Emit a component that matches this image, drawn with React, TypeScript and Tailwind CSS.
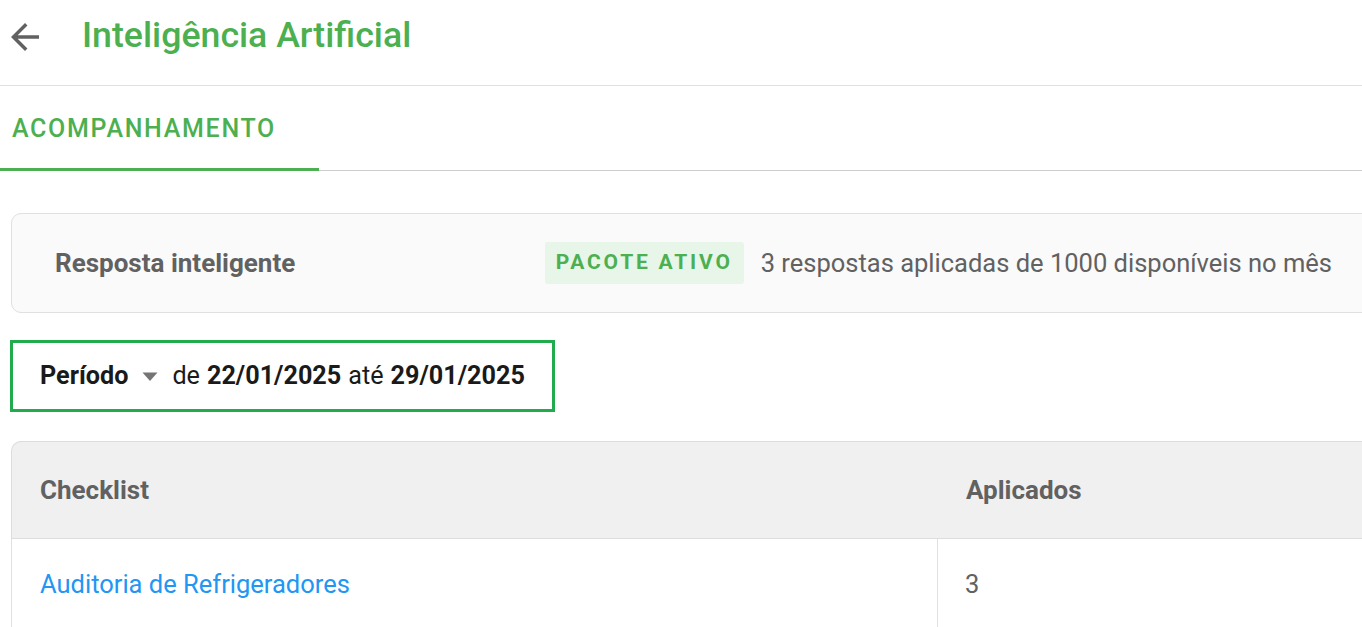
import React from 'react';

const font = { fontFamily: 'Roboto, "Noto Sans", sans-serif' };

function BackArrow() {
  return (
    <svg width="42" height="42" viewBox="0 0 24 24" className="fill-[#616161]">
      <path d="M20 11H7.83l5.59-5.59L12 4l-8 8 8 8 1.41-1.41L7.83 13H20v-2z" />
    </svg>
  );
}

function Caret() {
  return (
    <svg width="16" height="10" viewBox="0 0 16 10" className="fill-[#757575]">
      <path d="M0.5 0.5h15L8 9z" />
    </svg>
  );
}

export default function App() {
  return (
    <div className="w-[1362px] h-[627px] overflow-hidden bg-white" style={font}>
      <div className="w-[1440px]">
        <header className="h-[86px] flex items-center border-b border-[#e0e0e0]">
          <button className="ml-[4px] mt-[-12px] w-[42px] h-[42px] flex items-center justify-center">
            <BackArrow />
          </button>
          <h1 className="ml-[36px] mt-[-13px] text-[35.7px] font-medium text-[#4caf50] leading-none">
            Inteligência Artificial
          </h1>
        </header>

        <nav className="h-[85px] flex border-b border-[#cccccc]">
          <div className="w-[319px] flex items-center pl-[12px] border-b-[3px] border-[#4caf50] mb-[-1px]">
            <span className="text-[25px] font-medium tracking-[1.7px] text-[#4caf50] leading-none mb-[-2px]">
              ACOMPANHAMENTO
            </span>
          </div>
        </nav>

        <main className="px-[11px] pt-[42px]">
          <section className="w-[1400px] h-[100px] flex items-center rounded-[10px] border border-[#e0e0e0] bg-[#fafafa] pl-[43px] pr-[78px]">
            <span className="text-[26px] font-bold text-[#616161]">Resposta inteligente</span>
            <div className="ml-auto flex items-center gap-[17px]">
              <span className="h-[42px] px-[11px] flex items-center rounded-[3px] bg-[#e8f5e9] text-[21px] font-bold tracking-[2.8px] text-[#4caf50]">
                PACOTE ATIVO
              </span>
              <span className="text-[25.5px] text-[#616161]">
                3 respostas aplicadas de 1000 disponíveis no mês
              </span>
            </div>
          </section>

          <div className="mt-[27px] ml-[-1px] w-[545px] h-[72px] flex items-center border-[3px] border-[#22ab4c] pl-[27px] text-[25.2px] text-[#1a1a1a]">
            <span className="font-bold">Período</span>
            <span className="ml-[14px] mr-[14px] mt-[2px]">
              <Caret />
            </span>
            <span>de</span>
            <span className="font-bold ml-[7px]">22/01/2025</span>
            <span className="ml-[7px]">até</span>
            <span className="font-bold ml-[7px]">29/01/2025</span>
          </div>

          <table className="mt-[29px] w-[1400px] border-separate border-spacing-0 text-left">
            <thead>
              <tr className="h-[98px] bg-[#f0f0f0]">
                <th className="w-[927px] pl-[28px] text-[26px] font-bold text-[#616161] border-t border-l border-b border-[#dddddd] rounded-tl-[10px]">
                  Checklist
                </th>
                <th className="pl-[28px] text-[26px] font-bold text-[#616161] border-t border-b border-[#dddddd]">
                  Aplicados
                </th>
              </tr>
            </thead>
            <tbody>
              <tr className="h-[90px]">
                <td className="pl-[28px] text-[25.5px] text-[#2196f3] border-l border-r border-[#e0e0e0]">
                  Auditoria de Refrigeradores
                </td>
                <td className="pl-[27px] text-[25.5px] text-[#616161]">3</td>
              </tr>
            </tbody>
          </table>
        </main>
      </div>
    </div>
  );
}
